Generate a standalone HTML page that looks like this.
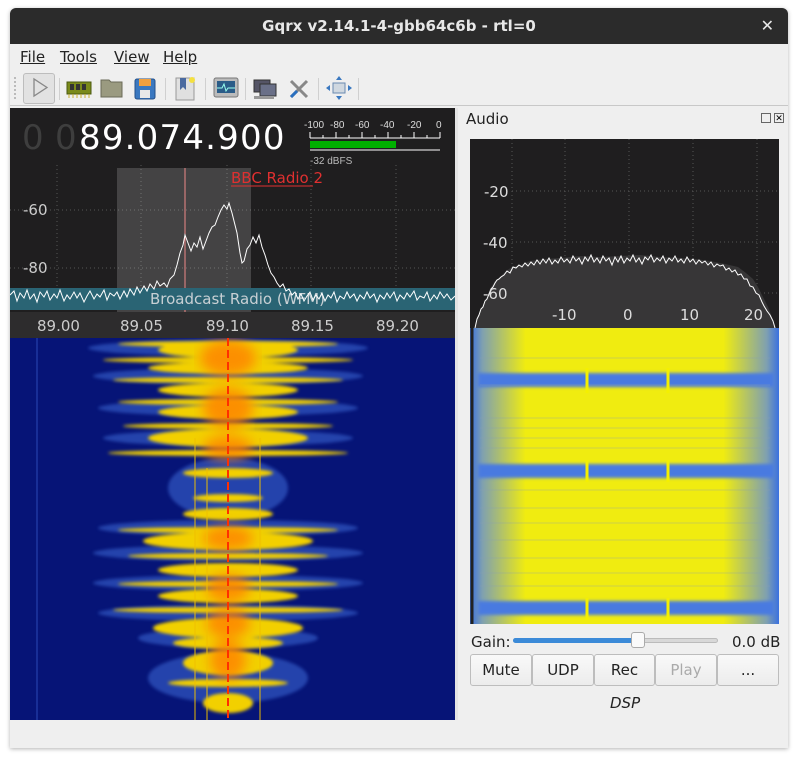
<!DOCTYPE html>
<html><head><meta charset="utf-8"><style>
*{margin:0;padding:0;box-sizing:border-box}
body{width:798px;height:757px;background:#fff;position:relative;overflow:hidden;font-family:"Liberation Sans","DejaVu Sans",sans-serif}
.abs{position:absolute}
#win{left:10px;top:8px;width:778px;height:740px;background:#efefef;box-shadow:0 1px 4px rgba(0,0,0,.3);border-radius:6px 6px 0 0}
#title{left:10px;top:8px;width:778px;height:36px;background:#2b2b2b;border-radius:6px 6px 0 0;color:#e8e8e8;font:bold 15px "DejaVu Sans",sans-serif;text-align:center;line-height:36px}
#menu{left:10px;top:44px;width:778px;height:26px;font:15px "DejaVu Sans",sans-serif;color:#222}
#menu span{position:absolute;top:4px;text-decoration:underline;text-decoration-thickness:1px}
#tb{left:10px;top:70px;width:778px;height:36px;border-bottom:1px solid #c8c8c8}
.sep{position:absolute;top:8px;width:1px;height:22px;background:#d0d0d0}
.btn{position:absolute;top:654px;height:32px;border:1px solid #bdbdbd;border-radius:3px;background:linear-gradient(#f9f9f9,#ececec);font:15px "DejaVu Sans",sans-serif;color:#222;text-align:center;line-height:30px}
</style></head><body>
<div id="win" class="abs"></div>
<div id="title" class="abs">Gqrx v2.14.1-4-gbb64c6b - rtl=0<span style="position:absolute;right:14px;top:0;font-weight:normal;font-size:16px">✕</span></div>
<div id="menu" class="abs"><span style="left:10px">File</span><span style="left:50px">Tools</span><span style="left:104px">View</span><span style="left:153px">Help</span></div>
<div id="tb" class="abs">
 <div class="abs" style="left:4px;top:7px;width:2px;height:22px;border-left:2px dotted #bbb"></div>
 <div class="abs" style="left:13px;top:3px;width:32px;height:31px;border:1px solid #bdbdbd;border-radius:3px;background:#e2e2e2"></div>
 <svg class="abs" style="left:0;top:0" width="778" height="36">
  <path d="M24 9 L24 26 L37 17.5 Z" fill="none" stroke="#888" stroke-width="1.3"/>
  <rect x="57" y="12" width="24" height="12" fill="#7a8a1a" stroke="#4b5a10"/>
  <rect x="60" y="14" width="4" height="6" fill="#333"/><rect x="66" y="14" width="4" height="6" fill="#333"/><rect x="72" y="14" width="4" height="6" fill="#333"/>
  <path d="M59 24v4M63 24v4M67 24v4M71 24v4M75 24v4M79 24v4" stroke="#c9b030"/>
  <path d="M91 10h8l2 2h11v15h-21z" fill="#9a9a80" stroke="#6b6b58"/>
  <rect x="125" y="9" width="20" height="20" rx="2" fill="#3a78c0" stroke="#24508a"/><rect x="129" y="9" width="12" height="7" fill="#f0a040"/><rect x="130" y="20" width="10" height="8" fill="#e8e8e8"/>
  <rect x="166" y="8" width="18" height="22" fill="#e0e0e0" stroke="#999"/><path d="M170 8v12l3-3 3 3V8z" fill="#4a6aa0"/><circle cx="182" cy="10" r="3" fill="#f4e040"/>
  <rect x="204" y="8" width="24" height="19" rx="2" fill="#bbb" stroke="#777"/><rect x="207" y="11" width="18" height="12" fill="#2a5c88"/><path d="M207 18h5l2-4 2 7 2-3h7" stroke="#9fe" fill="none"/>
  <rect x="244" y="10" width="16" height="12" fill="#556" stroke="#333"/><rect x="250" y="14" width="16" height="12" fill="#6a7088" stroke="#333"/><rect x="244" y="26" width="20" height="3" fill="#999"/>
  <path d="M281 11l16 16M297 11l-16 16" stroke="#888" stroke-width="3"/><path d="M281 27l6-6" stroke="#2a70c0" stroke-width="3"/>
  <rect x="323" y="13" width="12" height="10" fill="#d0d8e0" stroke="#6a8ab0"/><path d="M329 6l-3 4h6zM329 30l-3-4h6zM316 18l4-3v6zM342 18l-4-3v6z" fill="#3a78c0"/>
 </svg>
 <div class="sep" style="left:49px"></div><div class="sep" style="left:155px"></div><div class="sep" style="left:195px"></div><div class="sep" style="left:235px"></div><div class="sep" style="left:308px"></div><div class="sep" style="left:348px"></div>
</div>

<!-- left panel -->
<div class="abs" style="left:10px;top:108px;width:445px;height:612px;background:#1f1e1f;overflow:hidden">
 <div class="abs" style="left:12px;top:10px;font:34px 'DejaVu Sans',sans-serif;color:#3e3e3e">0</div>
 <div class="abs" style="left:45px;top:10px;font:34px 'DejaVu Sans',sans-serif;color:#3e3e3e">0</div>
 <div class="abs" style="left:69px;top:10px;font:34px 'DejaVu Sans',sans-serif;color:#fff;letter-spacing:1.2px">89.074.900</div>
 <svg class="abs" style="left:290px;top:8px" width="150" height="50">
  <g fill="#ddd" font-size="10" font-family="Liberation Sans">
   <text x="4" y="12">-100</text><text x="30" y="12">-80</text><text x="55" y="12">-60</text><text x="80" y="12">-40</text><text x="107" y="12">-20</text><text x="136" y="12">0</text></g>
  <path d="M10 16v6M23 19v3M36 16v6M49 19v3M62 16v6M75 19v3M88 16v6M101 19v3M114 16v6M127 19v3M140 16v6M10 22h130M10 34h130" stroke="#fff"/>
  <rect x="10" y="25" width="86" height="7" fill="#00b000"/>
  <text x="10" y="48" fill="#bbb" font-size="10" font-family="Liberation Sans">-32 dBFS</text>
 </svg>
 <svg class="abs" style="left:0;top:57px" width="445" height="173">
  <g stroke="#555" stroke-dasharray="1 3"><path d="M47 0v173M131 0v173M217 0v173M301 0v173M386 0v173M0 45h445M0 103h445"/></g>
  <rect x="107" y="3" width="134" height="170" fill="#fff" fill-opacity=".17"/>
  <path d="M175 3v170" stroke="#e88" stroke-width="1"/>
  <rect x="0" y="123" width="445" height="22" fill="#2a6474"/>
  <text x="140" y="139" fill="#c8d0d4" font-size="15" font-family="DejaVu Sans">Broadcast Radio (WFM)</text>
  <text x="221" y="18" fill="#e03030" font-size="15" font-family="DejaVu Sans">BBC Radio 2</text>
  <path d="M221 21h82" stroke="#e03030"/>
  <rect x="0" y="147" width="445" height="26" fill="#2d2c2d"/>
  <polyline fill="none" stroke="#fff" stroke-width="1" points="0,130 4,126 7,136 10,128 14,133 17,125 20,134 24,129 27,137 30,127 34,132 37,126 40,135 44,129 47,133 50,125 54,136 57,130 60,134 64,127 67,133 70,128 74,137 77,131 80,126 84,134 87,129 90,132 94,125 97,135 100,128 104,131 107,127 110,134 114,126 117,132 120,124 124,130 127,122 130,128 134,121 137,126 140,119 144,124 147,116 150,121 154,118 157,122 160,114 164,110 167,100 170,88 173,80 175,70 178,78 181,86 184,78 187,82 190,72 193,84 196,76 199,68 202,62 205,60 208,52 211,45 214,40 217,44 219,38 222,48 224,56 227,68 230,88 232,98 234,96 237,84 240,80 243,72 246,78 249,70 252,82 255,90 258,100 261,108 264,112 267,118 270,122 273,119 276,126 279,124 282,130 285,127 288,134 291,129 294,136 297,131 300,127 303,135 306,130 309,134 312,128 315,136 318,130 321,133 324,127 327,137 330,131 334,134 337,127 340,133 344,129 347,136 350,130 354,134 357,127 360,133 364,129 367,137 370,130 374,134 377,128 380,133 384,127 387,136 390,130 394,134 397,128 400,132 404,126 407,135 410,131 414,133 417,127 420,136 424,130 427,134 430,127 434,133 437,129 441,135 445,131"/>
  <g fill="#ccc" font-size="15" font-family="DejaVu Sans">
   <text x="13" y="50">-60</text><text x="13" y="108">-80</text>
   <text x="27" y="166">89.00</text><text x="110" y="166">89.05</text><text x="196" y="166">89.10</text><text x="281" y="166">89.15</text><text x="366" y="166">89.20</text></g>
 </svg>
 <svg class="abs" style="left:0;top:230px" width="445" height="382">
  <defs><filter id="b" x="-50%" y="-50%" width="200%" height="200%"><feGaussianBlur stdDeviation="1.5"/></filter>
  <filter id="b2"><feGaussianBlur stdDeviation="6"/></filter></defs>
  <rect width="445" height="382" fill="#061477"/>
  <g fill="#3d6ad8" opacity=".55" filter="url(#b)">
   <ellipse cx="218" cy="10" rx="140" ry="8"/><ellipse cx="218" cy="38" rx="135" ry="8"/><ellipse cx="218" cy="70" rx="130" ry="8"/><ellipse cx="218" cy="100" rx="125" ry="8"/><ellipse cx="218" cy="150" rx="60" ry="30"/><ellipse cx="218" cy="190" rx="130" ry="8"/><ellipse cx="218" cy="215" rx="135" ry="8"/><ellipse cx="218" cy="245" rx="135" ry="8"/><ellipse cx="218" cy="275" rx="130" ry="8"/><ellipse cx="218" cy="300" rx="90" ry="10"/><ellipse cx="218" cy="340" rx="80" ry="25"/>
  </g>
  <g fill="#f2d000" filter="url(#b)">
   <ellipse cx="218" cy="6" rx="110" ry="3"/><ellipse cx="218" cy="12" rx="70" ry="8"/><ellipse cx="218" cy="22" rx="125" ry="3"/><ellipse cx="218" cy="30" rx="80" ry="6"/><ellipse cx="218" cy="42" rx="115" ry="3"/><ellipse cx="218" cy="52" rx="70" ry="7"/><ellipse cx="218" cy="64" rx="110" ry="3"/><ellipse cx="218" cy="74" rx="70" ry="7"/><ellipse cx="218" cy="88" rx="105" ry="3"/><ellipse cx="218" cy="100" rx="80" ry="9"/><ellipse cx="218" cy="115" rx="120" ry="3"/>
   <ellipse cx="218" cy="135" rx="45" ry="5"/><ellipse cx="218" cy="160" rx="35" ry="4"/><ellipse cx="218" cy="176" rx="45" ry="6"/><ellipse cx="218" cy="192" rx="110" ry="3"/><ellipse cx="218" cy="203" rx="85" ry="9"/><ellipse cx="218" cy="218" rx="100" ry="3"/><ellipse cx="218" cy="232" rx="70" ry="7"/><ellipse cx="218" cy="246" rx="110" ry="3"/><ellipse cx="218" cy="258" rx="70" ry="7"/><ellipse cx="218" cy="272" rx="115" ry="3"/><ellipse cx="218" cy="290" rx="75" ry="10"/><ellipse cx="218" cy="305" rx="55" ry="6"/><ellipse cx="218" cy="325" rx="45" ry="12"/><ellipse cx="218" cy="345" rx="60" ry="4"/><ellipse cx="218" cy="365" rx="25" ry="10"/>
  </g>
  <g fill="#ff8000" opacity=".8" filter="url(#b2)">
   <ellipse cx="218" cy="20" rx="28" ry="18"/><ellipse cx="218" cy="70" rx="25" ry="20"/><ellipse cx="218" cy="110" rx="25" ry="12"/><ellipse cx="218" cy="200" rx="25" ry="12"/><ellipse cx="218" cy="250" rx="22" ry="14"/><ellipse cx="218" cy="285" rx="22" ry="15"/><ellipse cx="218" cy="322" rx="18" ry="20"/></g>
  <g stroke="#f0c000" stroke-width="1.2" opacity=".8"><path d="M185 100v282M250 100v282M197 130v252"/></g>
  <path d="M218 0v382" stroke="#ff3000" stroke-width="2" stroke-dasharray="8 4"/>
  <path d="M27 0v382" stroke="#3a60d0" stroke-width="1" opacity=".7"/>
 </svg>
</div>
<div class="abs" style="left:455px;top:108px;width:3px;height:612px;background:#e4e4e4"></div>

<!-- right panel -->
<div class="abs" style="left:466px;top:110px;font:15px 'DejaVu Sans',sans-serif;color:#222">Audio</div>
<div class="abs" style="left:761px;top:113px;width:10px;height:10px;border:1px solid #666;font-size:8px"></div>
<div class="abs" style="left:774px;top:113px;width:10px;height:10px;border:1px solid #666;font:9px sans-serif;line-height:8px;text-align:center">✕</div>
<svg class="abs" style="left:470px;top:139px" width="309" height="189">
 <rect width="309" height="189" fill="#1f1e1f"/>
 <g stroke="#555" stroke-dasharray="1 3"><path d="M42 0v189M95 0v189M159 0v189M223 0v189M287 0v189M42 52h267M42 103h267M42 154h267"/></g>
 <path d="M5 189 L8 178 12 168 16 160 20 150 25 142 30 138 36 132 42 128 50 126 60 122 75 120 90 119 110 117 130 118 150 117 170 116 190 118 210 119 225 120 240 122 255 125 268 128 276 134 283 140 288 148 293 158 298 168 302 178 306 189 Z" fill="#373637"/>
 <polyline fill="none" stroke="#fff" points="5,189 7,180 9,176 11,170 13,168 15,162 17,160 19,155 21,150 23,148 25,144 27,141 29,140 31,138 34,136 37,132 40,134 43,128 46,129 49,126 52,128 55,124 58,127 61,123 64,126 67,121 70,125 73,120 76,124 79,119 82,125 85,121 88,124 91,118 94,123 97,120 100,124 103,117 106,122 109,119 112,125 115,118 118,122 121,116 124,123 127,119 130,124 133,117 136,122 139,119 142,126 145,118 148,123 151,117 154,124 157,119 160,122 163,116 166,123 169,119 172,125 175,118 178,121 181,116 184,123 187,119 190,122 193,117 196,124 199,119 202,122 205,117 208,123 211,120 214,124 217,118 220,123 223,120 226,125 229,121 232,124 235,122 238,126 241,123 244,128 247,125 250,127 253,126 256,131 259,129 262,133 265,131 268,136 271,135 274,140 277,140 280,147 283,148 286,154 289,156 292,163 294,167 297,172 300,176 303,182 305,189"/>
 <g fill="#ddd" font-size="15" font-family="DejaVu Sans">
  <text x="14" y="58">-20</text><text x="13" y="109">-40</text><text x="13" y="160">-60</text>
  <text x="82" y="181">-10</text><text x="153" y="181">0</text><text x="210" y="181">10</text><text x="274" y="181">20</text></g>
</svg>
<svg class="abs" style="left:470px;top:328px" width="309" height="296">
 <defs><linearGradient id="h" x1="0" x2="1"><stop offset="0" stop-color="#3a70e0"/><stop offset=".04" stop-color="#7fa0b0"/><stop offset=".18" stop-color="#f0ec10"/><stop offset=".82" stop-color="#f0ec10"/><stop offset=".96" stop-color="#7fa0b0"/><stop offset="1" stop-color="#3a70e0"/></linearGradient>
 <filter id="c"><feGaussianBlur stdDeviation="1.5"/></filter></defs>
 <rect width="309" height="296" fill="url(#h)"/>
 <g fill="#4a7ae0" filter="url(#c)">
  <rect x="8" y="45" width="296" height="14"/><rect x="8" y="136" width="296" height="14"/><rect x="8" y="273" width="296" height="14"/>
 </g>
 <g stroke="#8aa0b0" stroke-width="1" opacity=".35"><path d="M10 30h290M10 57h290M10 90h290M10 100h290M10 110h290M10 120h290M10 162h290M10 180h290M10 195h290M10 212h290M10 230h290M10 245h290M10 258h290"/></g>
 <g stroke="#f4f000" stroke-width="3"><path d="M117 40v25M198 40v25M117 132v22M198 132v22M117 270v22M198 270v22"/></g>
 <path d="M2 0v296" stroke="#222" stroke-width="3"/>
</svg>
<div class="abs" style="left:471px;top:633px;font:15px 'DejaVu Sans',sans-serif;color:#222">Gain:</div>
<div class="abs" style="left:513px;top:638px;width:205px;height:5px;border-radius:3px;background:#d8d8d8;border:1px solid #bbb"></div>
<div class="abs" style="left:513px;top:638px;width:125px;height:5px;border-radius:3px;background:#3b8ad8"></div>
<div class="abs" style="left:631px;top:632px;width:14px;height:16px;border-radius:3px;background:#fafafa;border:1px solid #aaa"></div>
<div class="abs" style="left:732px;top:633px;font:15px 'DejaVu Sans',sans-serif;color:#222">0.0 dB</div>
<div class="btn" style="left:470px;width:62px">Mute</div>
<div class="btn" style="left:532px;width:62px">UDP</div>
<div class="btn" style="left:594px;width:61px">Rec</div>
<div class="btn" style="left:655px;width:62px;color:#aaa">Play</div>
<div class="btn" style="left:717px;width:62px">...</div>
<div class="abs" style="left:610px;top:694px;font:italic 15px 'DejaVu Sans',sans-serif;color:#222">DSP</div>
</body></html>
